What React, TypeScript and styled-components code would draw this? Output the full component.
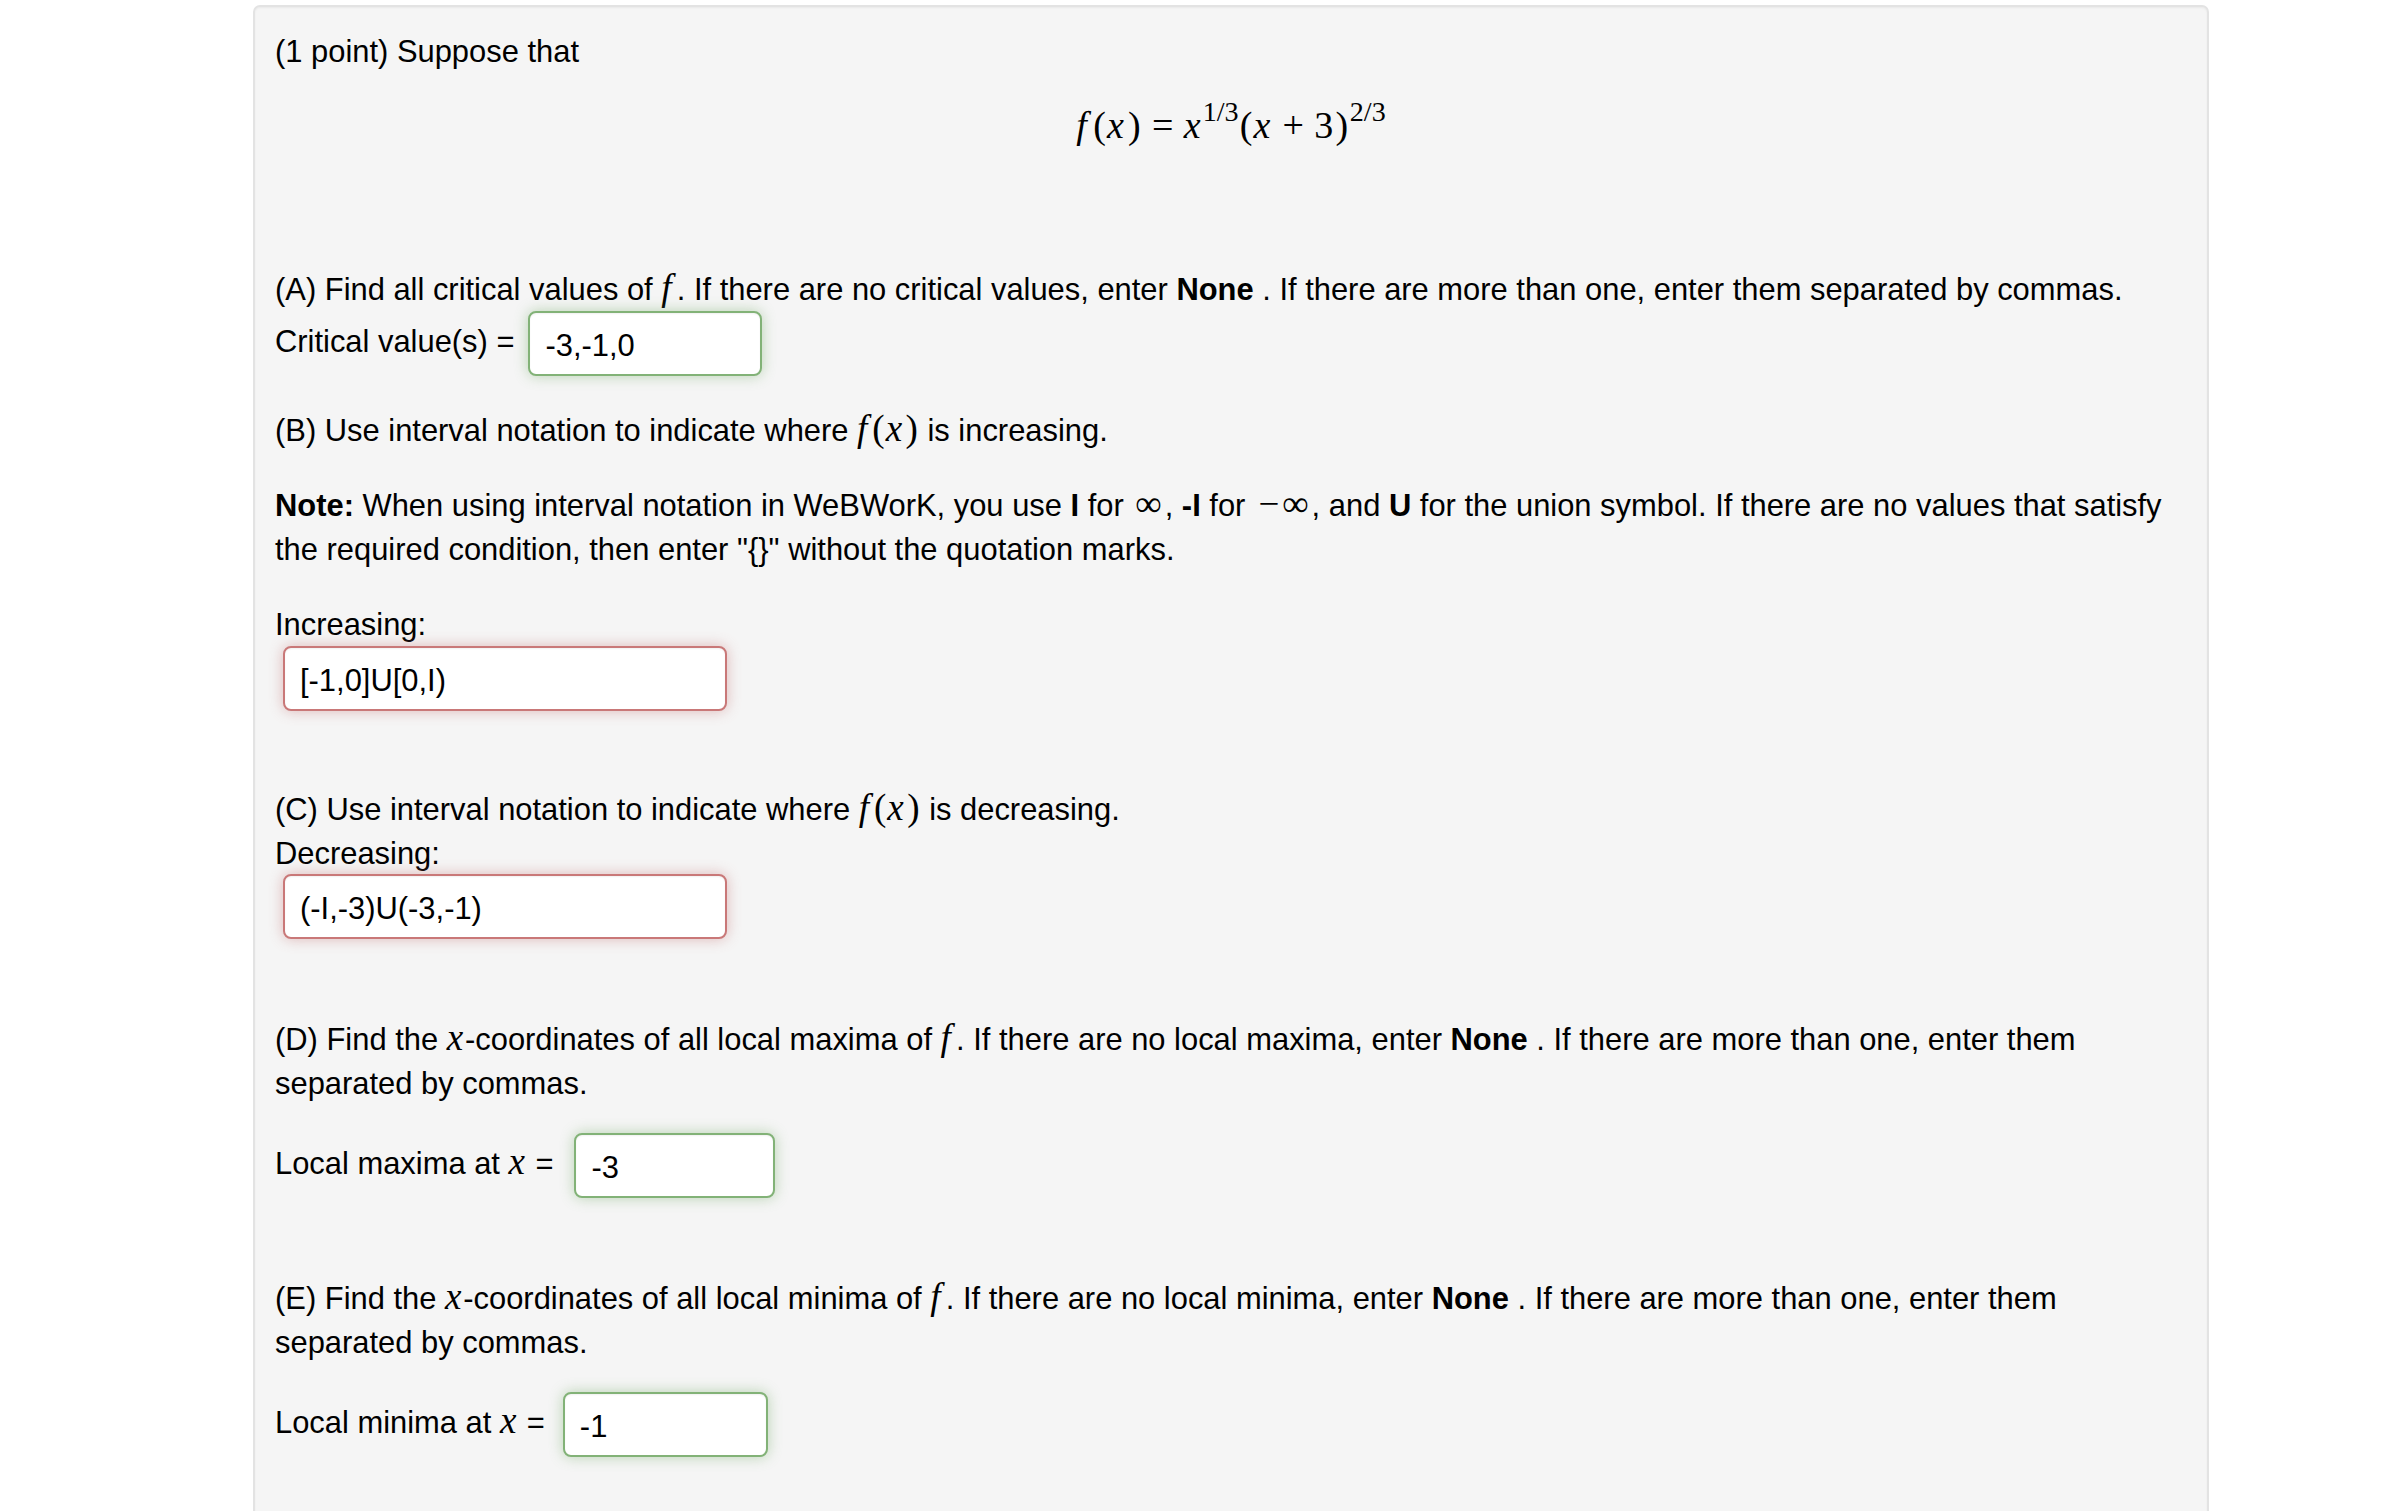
import React from "react";
import styled, { createGlobalStyle, css } from "styled-components";

const GlobalStyle = createGlobalStyle`
  html, body {
    margin: 0;
    padding: 0;
    background: #ffffff;
  }
  body {
    font-family: "Liberation Sans", Arial, Helvetica, sans-serif;
    color: #000000;
  }
`;

const Page = styled.div`
  padding: 5px 0 0 253px;
`;

const Panel = styled.div`
  box-sizing: border-box;
  width: 1956px;
  background: #f5f5f5;
  border: 2px solid #e3e3e3;
  border-radius: 7px;
  box-shadow: inset 0 1px 2px rgba(0, 0, 0, 0.05);
  padding: 23px 20px 90px 20px;
  font-size: 30.9px;
  line-height: 44px;
`;

const Para = styled.p<{ $gap?: number }>`
  margin: ${(p) => p.$gap ?? 0}px 0 0 0;
  line-height: 44px;
  white-space: nowrap;
`;

const Formula = styled.div<{ $gap: number }>`
  margin-top: ${(p) => p.$gap}px;
  text-align: center;
  line-height: 44px;
  font-family: "Liberation Serif", "Times New Roman", serif;
  font-size: 38px;
`;

const MI = styled.span<{ $after?: number }>`
  font-family: "Liberation Serif", "Times New Roman", serif;
  font-style: italic;
  padding-right: ${(p) => p.$after ?? 0.06}em;
`;

const MR = styled.span`
  font-family: "Liberation Serif", "Times New Roman", serif;
  font-style: normal;
  padding: 0 0.03em;
`;

const Op = styled.span<{ $space: number }>`
  font-family: "Liberation Serif", "Times New Roman", serif;
  margin: 0 ${(p) => p.$space}em;
`;

const Sup = styled.span`
  font-family: "Liberation Serif", "Times New Roman", serif;
  font-size: 0.74em;
  vertical-align: 0.62em;
  line-height: 0;
  padding-left: 0.02em;
`;

const InlineMath = styled.span`
  font-family: "Liberation Serif", "Times New Roman", serif;
  font-size: 1.2em;
  line-height: 0;
`;

const Symbol = styled.span<{ $left: number; $right: number }>`
  padding: 0 ${(p) => p.$right}em 0 ${(p) => p.$left}em;
`;

const Strong = styled.b`
  font-weight: 700;
`;

const AnswerRow = styled.div<{ $gap: number; $indent?: number; $space?: number }>`
  display: flex;
  align-items: center;
  gap: ${(p) => p.$space ?? 14}px;
  margin-top: ${(p) => p.$gap}px;
  margin-left: ${(p) => p.$indent ?? 0}px;
`;

const Label = styled.span`
  line-height: 44px;
  padding-bottom: 3px;
  white-space: nowrap;
`;

const statusStyles = {
  correct: css`
    border-color: #82b277;
    box-shadow: 0 0 14px rgba(110, 168, 98, 0.45), inset 0 1px 2px rgba(0, 0, 0, 0.06);
  `,
  incorrect: css`
    border-color: #c97878;
    box-shadow: 0 0 14px rgba(196, 108, 108, 0.45), inset 0 1px 2px rgba(0, 0, 0, 0.06);
  `,
};

const AnswerBox = styled.input<{ $status: "correct" | "incorrect"; $width: number }>`
  box-sizing: border-box;
  width: ${(p) => p.$width}px;
  height: 65px;
  margin: 0;
  padding: 4px 14px 0 15px;
  background: #ffffff;
  border: 2px solid;
  border-radius: 8px;
  font-family: "Liberation Sans", Arial, Helvetica, sans-serif;
  font-size: 30.9px;
  color: #000000;
  outline: none;
  ${(p) => statusStyles[p.$status]}
`;

const Fx = () => (
  <InlineMath>
    <MI $after={0.1}>f</MI>
    <MR>(</MR>
    <MI $after={0.06}>x</MI>
    <MR>)</MR>
  </InlineMath>
);

const F = () => (
  <InlineMath>
    <MI $after={0.14}>f</MI>
  </InlineMath>
);

const X = () => (
  <InlineMath>
    <MI $after={0.05}>x</MI>
  </InlineMath>
);

export default function App() {
  return (
    <>
      <GlobalStyle />
      <Page>
        <Panel>
          <Para>(1 point) Suppose that</Para>

          <Formula $gap={29}>
            <MI $after={0.14}>f</MI>
            <MR>(</MR>
            <MI $after={0.08}>x</MI>
            <MR>)</MR>
            <Op $space={0.27}>=</Op>
            <MI $after={0.04}>x</MI>
            <Sup>1/3</Sup>
            <MR>(</MR>
            <MI $after={0.08}>x</MI>
            <Op $space={0.24}>+</Op>
            <MR>3</MR>
            <MR>)</MR>
            <Sup>2/3</Sup>
          </Formula>

          <Para $gap={121}>
            (A) Find all critical values of <F />. If there are no critical values, enter{" "}
            <Strong>None</Strong> . If there are more than one, enter them separated by commas.
          </Para>
          <AnswerRow $gap={-1}>
            <Label>Critical value(s) =</Label>
            <AnswerBox $status="correct" $width={234} readOnly value="-3,-1,0" />
          </AnswerRow>

          <Para $gap={33}>
            (B) Use interval notation to indicate where <Fx /> is increasing.
          </Para>

          <Para $gap={31}>
            <Strong>Note:</Strong> When using interval notation in WeBWorK, you use <Strong>I</Strong> for{" "}
            <InlineMath>
              <Symbol $left={0.08} $right={0.08}>∞</Symbol>
            </InlineMath>
            , <Strong>-I</Strong> for{" "}
            <InlineMath>
              <Symbol $left={0.12} $right={0.04}>−</Symbol>
              <Symbol $left={0.04} $right={0.08}>∞</Symbol>
            </InlineMath>
            , and <Strong>U</Strong> for the union symbol. If there are no values that satisfy
            <br />
            the required condition, then enter "{"{}"}" without the quotation marks.
          </Para>

          <Para $gap={31}>Increasing:</Para>
          <AnswerRow $gap={-1} $indent={8}>
            <AnswerBox $status="incorrect" $width={444} readOnly value="[-1,0]U[0,I)" />
          </AnswerRow>

          <Para $gap={77}>
            (C) Use interval notation to indicate where <Fx /> is decreasing.
          </Para>
          <Para>Decreasing:</Para>
          <AnswerRow $gap={-2} $indent={8}>
            <AnswerBox $status="incorrect" $width={444} readOnly value="(-I,-3)U(-3,-1)" />
          </AnswerRow>

          <Para $gap={79}>
            (D) Find the <X />-coordinates of all local maxima of <F />. If there are no local maxima, enter{" "}
            <Strong>None</Strong> . If there are more than one, enter them
            <br />
            separated by commas.
          </Para>
          <AnswerRow $gap={27} $space={21}>
            <Label>
              Local maxima at <X /> =
            </Label>
            <AnswerBox $status="correct" $width={201} readOnly value="-3" />
          </AnswerRow>

          <Para $gap={79}>
            (E) Find the <X />-coordinates of all local minima of <F />. If there are no local minima, enter{" "}
            <Strong>None</Strong> . If there are more than one, enter them
            <br />
            separated by commas.
          </Para>
          <AnswerRow $gap={27} $space={18}>
            <Label>
              Local minima at <X /> =
            </Label>
            <AnswerBox $status="correct" $width={205} readOnly value="-1" />
          </AnswerRow>
        </Panel>
      </Page>
    </>
  );
}
